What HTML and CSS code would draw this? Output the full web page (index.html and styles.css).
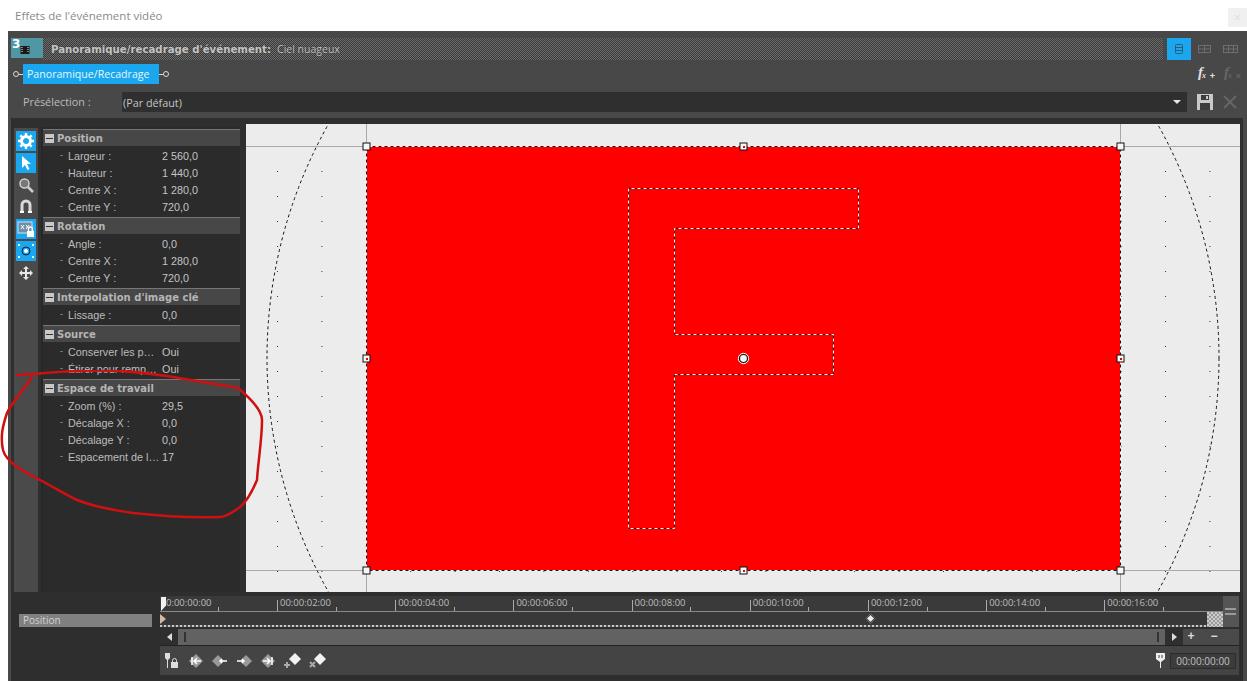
FILE: index.html
```html
<!DOCTYPE html>
<html lang="fr">
<head>
<meta charset="utf-8">
<title>Effets de l'événement vidéo</title>
<link rel="stylesheet" href="styles.css">
</head>
<body>
<div class="titlebar">
  <span class="title">Effets de l'événement vidéo</span>
  <span class="close">×</span>
</div>
<div class="app">
  <div class="headrow">
    <div class="fxicon"><b>3</b><svg width="10" height="10" viewBox="0 0 10 10"><rect x="0.5" y="1" width="9" height="8" fill="#1a1a1a"/><path d="M2 2v6M8 2v6" stroke="#eee" stroke-dasharray="1 1"/></svg></div>
    <div class="hatch"><strong>Panoramique/recadrage d'événement:</strong><span>Ciel nuageux</span></div>
    <div class="layouts">
      <span class="layoutbtn on"><svg width="10" height="12" viewBox="0 0 10 12"><rect x="1.5" y="1.5" width="7" height="9" rx="1" fill="none" stroke="#2b5a7a"/><path d="M1.5 4.5h7M1.5 7.5h7" stroke="#2b5a7a"/></svg></span>
      <span class="layoutbtn"><svg width="14" height="10" viewBox="0 0 14 10"><rect x="0.5" y="1.5" width="12" height="7" fill="none" stroke="#6e6e6e"/><path d="M6.5 1.5v7M.5 5h12" stroke="#6e6e6e"/></svg></span>
      <span class="layoutbtn"><svg width="16" height="10" viewBox="0 0 16 10"><rect x="0.5" y="1.5" width="14" height="7" fill="none" stroke="#6e6e6e"/><path d="M5.5 1.5v7M10.5 1.5v7M.5 5h14" stroke="#6e6e6e"/></svg></span>
    </div>
  </div>
  <div class="tabrow">
    <div class="chain">
      <i class="ring"></i><i class="dash"></i>
      <span class="tab">Panoramique/Recadrage</span>
      <i class="dash"></i><i class="ring"></i>
    </div>
    <div class="fxbtns">
      <span class="fx">f<sub>x</sub><em class="plus">+</em></span>
      <span class="fx dim">f<sub>x</sub><em class="plus">×</em></span>
    </div>
  </div>
  <div class="presetrow">
    <span class="presetlabel">Présélection :</span>
    <div class="presetbox"><span>(Par défaut)</span><i class="caret"></i></div>
    <svg class="presetic" width="16" height="16" viewBox="0 0 16 16"><path d="M0 0h16v16H0z" fill="#c9c9c9"/><path d="M4 1h8v5H4zM3 9h10v7H3z" fill="#3c3c3c"/><path d="M9 2h2v3H9z" fill="#c9c9c9"/></svg>
    <svg class="presetic" width="16" height="16" viewBox="0 0 16 16"><path d="M2 2l12 12M14 2L2 14" stroke="#666" stroke-width="2"/></svg>
  </div>
  <div class="main">
    <div class="tools">
      <span class="tool on"><svg width="16" height="16" viewBox="0 0 16 16"><circle cx="8" cy="8" r="4.5" fill="none" stroke="#fff" stroke-width="3"/><path d="M8 0v3M8 13v3M0 8h3M13 8h3M2.3 2.3l2 2M11.7 11.7l2 2M2.3 13.7l2-2M11.7 4.3l2-2" stroke="#fff" stroke-width="2.4"/></svg></span>
      <span class="tool on"><svg width="14" height="16" viewBox="0 0 14 16"><path d="M3 1l9 8H8l2.500 5-2 1L6 10l-3 3z" fill="#fff"/></svg></span>
      <span class="tool"><svg width="16" height="16" viewBox="0 0 16 16"><circle cx="6.500" cy="6.500" r="4.500" fill="#777" stroke="#d0d0d0" stroke-width="1.500"/><path d="M10 10l5 5" stroke="#d0d0d0" stroke-width="2.500"/></svg></span>
      <span class="tool"><svg width="12" height="16" viewBox="0 0 12 16"><path d="M2 14V6a4 4 0 0 1 8 0v8" fill="none" stroke="#d8d8d8" stroke-width="3"/><path d="M0 13h4M8 13h4" stroke="#fff" stroke-width="2"/></svg></span>
      <span class="tool on"><svg width="18" height="17" viewBox="0 0 18 17"><rect x="1" y="1" width="14" height="11" fill="#6f8fa5" stroke="#d5e2ea"/><path d="M4 4l3 4M7 4L4 8M9 4l3 4M12 4L9 8" stroke="#fff"/><rect x="10" y="10" width="7" height="6" fill="#fff"/><path d="M11.500 10V8a2 2 0 0 1 4 0v2" fill="none" stroke="#fff" stroke-width="1.300"/></svg></span>
      <span class="tool on"><svg width="18" height="16" viewBox="0 0 18 16"><circle cx="9" cy="8" r="4" fill="none" stroke="#123" /><circle cx="9" cy="8" r="2" fill="#fff"/><path d="M1 1h2v2H1zM15 1h2v2h-2zM1 13h2v2H1zM15 13h2v2h-2z" fill="#dff"/></svg></span>
      <span class="tool"><svg width="14" height="14" viewBox="0 0 14 14"><path d="M7 0l3 3H8v3h3V4l3 3-3 3V8H8v3h2l-3 3-3-3h2V8H3v2L0 7l3-3v2h3V3H4z" fill="#e6e6e6"/></svg></span>
    </div>
    <div class="props">
      <div class="group"><i class="minus"></i>Position</div>
      <div class="row"><i class="tick"></i><span class="lab">Largeur :</span><span class="val">2 560,0</span></div>
      <div class="row"><i class="tick"></i><span class="lab">Hauteur :</span><span class="val">1 440,0</span></div>
      <div class="row"><i class="tick"></i><span class="lab">Centre X :</span><span class="val">1 280,0</span></div>
      <div class="row"><i class="tick"></i><span class="lab">Centre Y :</span><span class="val">720,0</span></div>
      <div class="group"><i class="minus"></i>Rotation</div>
      <div class="row"><i class="tick"></i><span class="lab">Angle :</span><span class="val">0,0</span></div>
      <div class="row"><i class="tick"></i><span class="lab">Centre X :</span><span class="val">1 280,0</span></div>
      <div class="row"><i class="tick"></i><span class="lab">Centre Y :</span><span class="val">720,0</span></div>
      <div class="group"><i class="minus"></i>Interpolation d'image clé</div>
      <div class="row"><i class="tick"></i><span class="lab">Lissage :</span><span class="val">0,0</span></div>
      <div class="group"><i class="minus"></i>Source</div>
      <div class="row"><i class="tick"></i><span class="lab">Conserver les p…</span><span class="val">Oui</span></div>
      <div class="row"><i class="tick"></i><span class="lab">Étirer pour remp…</span><span class="val">Oui</span></div>
      <div class="group"><i class="minus"></i>Espace de travail</div>
      <div class="row"><i class="tick"></i><span class="lab">Zoom (%) :</span><span class="val">29,5</span></div>
      <div class="row"><i class="tick"></i><span class="lab">Décalage X :</span><span class="val">0,0</span></div>
      <div class="row"><i class="tick"></i><span class="lab">Décalage Y :</span><span class="val">0,0</span></div>
      <div class="row"><i class="tick"></i><span class="lab">Espacement de l…</span><span class="val">17</span></div>
    </div>
    <div class="canvas">
      <svg class="stage" width="994" height="468" viewBox="0 0 994 468">
        <defs>
          <pattern id="dots" x="31" y="-3" width="44.4" height="25" patternUnits="userSpaceOnUse"><rect width="1" height="1" fill="#333"/></pattern>
        </defs>
        <rect width="994" height="468" fill="#ececec"/>
        <rect width="994" height="468" fill="url(#dots)"/>
        <path d="M120.500 0V468M874.500 0V468M0 22.500H994M0 446.500H994" stroke="#a9a9a9"/>
        <rect x="120.500" y="22.500" width="754" height="424" fill="#ff0000"/>
        <rect x="120.500" y="22.500" width="754" height="424" fill="none" stroke="#fff"/>
        <rect x="120.500" y="22.500" width="754" height="424" fill="none" stroke="#111" stroke-dasharray="3 3"/>
        <circle cx="497" cy="234" r="476" fill="none" stroke="#111" stroke-dasharray="3 3"/>
        <path d="M382.500 64.500H612.500V104.500H428.500V210.500H587.500V250.500H428.500V404.500H382.500Z" fill="none" stroke="#fff"/>
        <path d="M382.500 64.500H612.500V104.500H428.500V210.500H587.500V250.500H428.500V404.500H382.500Z" fill="none" stroke="#111" stroke-dasharray="3 3"/>
        <g fill="#f4f8f8" stroke="#111">
          <rect x="117" y="19" width="7" height="7"/><rect x="871" y="19" width="7" height="7"/>
          <rect x="117" y="443" width="7" height="7"/><rect x="871" y="443" width="7" height="7"/>
          <rect x="494" y="19" width="7" height="7"/><rect x="494" y="443" width="7" height="7"/>
          <rect x="117" y="231" width="7" height="7"/><rect x="871" y="231" width="7" height="7"/>
        </g>
        <g fill="#e00" stroke="none">
          <rect x="497" y="22" width="2" height="2"/><rect x="497" y="446" width="2" height="2"/>
          <rect x="120" y="234" width="2" height="2"/><rect x="874" y="234" width="2" height="2"/>
        </g>
        <circle cx="497.500" cy="234.500" r="4" fill="#eef6f8" stroke="#111" stroke-width="1.200"/>
        <circle cx="497.500" cy="234.500" r="5.200" fill="none" stroke="#fff"/>
      </svg>
    </div>
  </div>
  <div class="bottom">
    <div class="kfleft"><span class="kflabel">Position</span></div>
    <div class="kfright">
      <div class="timeline">
        <div class="timelinebody">
          <div class="ruler">
            <i class="playhead"></i>
            <span class="cell first">0:00:00:00</span>
            <span class="cell">00:00:02:00</span>
            <span class="cell">00:00:04:00</span>
            <span class="cell">00:00:06:00</span>
            <span class="cell">00:00:08:00</span>
            <span class="cell">00:00:10:00</span>
            <span class="cell">00:00:12:00</span>
            <span class="cell">00:00:14:00</span>
            <span class="cell">00:00:16:00</span>
          </div>
          <div class="track"><i class="cursorkf"></i><i class="kf"></i><i class="checker"></i></div>
        </div>
        <div class="eqbtn"><i></i><i></i></div>
      </div>
      <div class="scrollrow">
        <span class="sbtn"><i class="tri left"></i></span>
        <div class="sbar"><i class="grip"></i><i class="grip"></i></div>
        <span class="sbtn"><i class="tri right"></i></span>
        <span class="zbtn">+</span><span class="zbtn">−</span>
      </div>
      <div class="transport">
        <svg class="tico" width="14" height="16" viewBox="0 0 14 16"><path d="M0 0h5v5L3 7v8H2V7L0 5z" fill="#ddd"/><rect x="6" y="9" width="7" height="6" fill="#ddd"/><path d="M7.500 9V7.500a2 2 0 0 1 4 0V9" fill="none" stroke="#ddd"/></svg>
        <svg class="tico" width="16" height="14" viewBox="0 0 16 14"><path d="M8 0l7 7-7 7-7-7z" fill="#999"/><path d="M13 7H6M9 4L6 7l3 3M4 3v8" stroke="#fff" stroke-width="1.500" fill="none"/></svg>
        <svg class="tico" width="16" height="14" viewBox="0 0 16 14"><path d="M6 1l6 6-6 6-6-6z" fill="#999"/><path d="M15 7H8M10 5L8 7l2 2" stroke="#fff" stroke-width="1.500" fill="none"/></svg>
        <svg class="tico" width="16" height="14" viewBox="0 0 16 14"><path d="M10 1l6 6-6 6-6-6z" fill="#999"/><path d="M1 7h7M6 5l2 2-2 2" stroke="#fff" stroke-width="1.500" fill="none"/></svg>
        <svg class="tico" width="16" height="14" viewBox="0 0 16 14"><path d="M8 0l7 7-7 7-7-7z" fill="#999"/><path d="M3 7h7M7 4l3 3-3 3M12 3v8" stroke="#fff" stroke-width="1.500" fill="none"/></svg>
        <svg class="tico" width="17" height="16" viewBox="0 0 17 16"><path d="M11 0l6 6-6 6-6-6z" fill="#f2f2f2"/><path d="M3 9v6M0 12h6" stroke="#aaa" stroke-width="2"/></svg>
        <svg class="tico" width="17" height="16" viewBox="0 0 17 16"><path d="M11 0l6 6-6 6-6-6z" fill="#f2f2f2"/><path d="M1 9l5 5M6 9l-5 5" stroke="#aaa" stroke-width="2"/></svg>
        <span class="grow"></span>
        <svg class="pin" width="9" height="15" viewBox="0 0 9 15"><path d="M0 0h9v6L5 9v6H4V9L0 6z" fill="#eee"/><path d="M3 2v3M6 2v3" stroke="#444"/></svg>
        <span class="timebox">00:00:00:00</span>
      </div>
    </div>
  </div>
</div>
<svg class="scribble" width="270" height="160" viewBox="0 370 270 160">
  <path d="M17 375C40 374 60 371 80 371C110 369 140 372 167 376C190 380 215 384 238 388C250 398 262 410 262 420C262 440 258 462 257 480C252 492 246 502 240 507C232 513 226 517 220 517C190 518 160 516 133 513C112 510 92 506 77 500C64 494 52 486 40 480C24 472 6 462 3 450C0 436 3 425 7 413C12 402 24 390 32 377" fill="none" stroke="#d01010" stroke-width="2.500" stroke-linecap="round"/>
</svg>
</body>
</html>
```
FILE: styles.css
```css
* { box-sizing: border-box; }
html, body { margin: 0; padding: 0; }
body {
  position: relative;
  width: 1247px;
  height: 681px;
  overflow: hidden;
  background: #fff;
  font-family: "Open Sans", "Liberation Sans", sans-serif;
  font-size: 11px;
  color: #c8c8c8;
}
i, em { display: block; font-style: normal; }

.titlebar {
  height: 31px;
  display: flex;
  align-items: center;
  justify-content: space-between;
  padding: 0 0 0 15px;
}
.title { font-size: 11.500px; color: #8a8a8a; }
.close {
  width: 19px;
  height: 19px;
  margin-top: 3px;
  background: #f0f0f0;
  color: #ddd;
  text-align: center;
  line-height: 19px;
  font-size: 12px;
}

.app {
  margin-left: 8px;
  height: 650px;
  background: #484848;
  display: flex;
  flex-direction: column;
}

.headrow {
  height: 29px;
  padding: 7px 0 0 3px;
  display: flex;
  align-items: flex-start;
}
.fxicon {
  position: relative;
  width: 32px;
  height: 20px;
  background: #4f97a3;
  display: flex;
}
.fxicon b {
  color: #fff;
  font: bold 12px "DejaVu Sans", sans-serif;
  margin: 0 0 0 1px;
  line-height: 13px;
}
.fxicon svg { margin-top: 7px; }
.hatch {
  width: 1120px;
  height: 22px;
  background-color: #3c3c3c;
  background-image: conic-gradient(#6c6c6c 25%, #3a3a3a 0 50%, #6c6c6c 0 75%, #3a3a3a 0);
  background-size: 2px 2px;
  display: flex;
  align-items: center;
  padding-left: 8px;
  gap: 6px;
}
.hatch strong {
  font: bold 10.200px "DejaVu Sans", sans-serif;
  color: #c4c4c4;
  text-shadow: 0 0 2px #3a3a3a;
}
.hatch span {
  font: 10.500px "Open Sans", sans-serif;
  color: #bdbdbd;
  text-shadow: 0 0 2px #3a3a3a;
}
.layouts { display: flex; margin-left: 4px; gap: 2px; }
.layoutbtn {
  width: 24px;
  height: 22px;
  display: flex;
  align-items: center;
  justify-content: center;
}
.layoutbtn.on { background: #1aa7f0; }

.tabrow {
  height: 32px;
  padding: 4px 0 0 5px;
  display: flex;
  justify-content: space-between;
}
.chain { display: flex; align-items: center; height: 20px; }
.ring {
  width: 6px;
  height: 6px;
  border: 1px solid #d8d8d8;
  border-radius: 50%;
}
.dash { width: 4px; height: 1px; background: #d8d8d8; }
.tab {
  width: 136px;
  height: 20px;
  background: #1aa7f0;
  color: #e8f6fd;
  font-size: 10.600px;
  line-height: 20px;
  padding-left: 4px;
}
.fxbtns { display: flex; gap: 11px; padding-right: 8px; }
.fx {
  position: relative;
  width: 15px;
  height: 18px;
  font: italic bold 15px "Liberation Serif", serif;
  color: #e0e0e0;
  line-height: 16px;
  letter-spacing: -1px;
}
.fx sub { font-size: 8px; vertical-align: -1px; }
.fx .plus {
  position: absolute;
  right: -1px;
  bottom: 1px;
  font: bold 9px/9px "Liberation Sans", sans-serif;
}
.fx.dim { color: #666; }

.presetrow {
  height: 26px;
  display: flex;
  align-items: flex-start;
  padding-left: 15px;
}
.presetlabel { width: 99px; line-height: 20px; font-size: 10.800px; color: #bcbcbc; }
.presetbox {
  width: 1065px;
  height: 20px;
  background: #2f2f2f;
  display: flex;
  align-items: center;
  justify-content: space-between;
  padding: 0 6px 0 1px;
  font-size: 10.800px;
  color: #c4c4c4;
}
.caret {
  width: 0;
  height: 0;
  border: 4px solid transparent;
  border-top: 4px solid #e8e8e8;
  border-bottom: 0;
}
.presetic { margin: 2px 0 0 10px; }
.presetic:last-child { margin-left: 9px; }

.main {
  width: 1232px;
  height: 474px;
  margin-left: 3px;
  background: #2f2f2f;
  display: flex;
  padding: 6px 3px 0 3px;
}
.tools {
  width: 24px;
  margin-top: 4px;
  height: 464px;
  background: #4a4a4a;
  display: flex;
  flex-direction: column;
  align-items: center;
  padding-top: 3px;
  gap: 2px;
}
.tool {
  width: 20px;
  height: 20px;
  display: flex;
  align-items: center;
  justify-content: center;
}
.tool.on { background: #1aa7f0; }
.props {
  width: 199px;
  margin: 3px 0 0 3px;
  height: 465px;
  background: #2b2b2b;
  border-left: 2px solid #272727;
}
.group {
  height: 16px;
  margin: 3px 0 1px;
  padding: 1px 0 0 2px;
  background: #474747;
  box-shadow: 0 -1px 0 #777;
  font: bold 10px/15px "DejaVu Sans", sans-serif;
  color: #b5b5b5;
  display: flex;
  align-items: center;
  white-space: nowrap;
}
.minus {
  position: relative;
  width: 9px;
  height: 9px;
  background: #c8c8c8;
  margin-right: 3px;
}
.minus::after {
  content: "";
  position: absolute;
  left: 1px;
  right: 1px;
  top: 4px;
  height: 1px;
  background: #333;
}
.row {
  height: 17px;
  display: flex;
  align-items: center;
  padding-left: 17px;
  font-family: "Liberation Sans", sans-serif;
  font-size: 10.800px;
  color: #bcbcbc;
  white-space: nowrap;
}
.tick { width: 3px; height: 1px; background: #4f7f6f; margin-right: 5px; }
.lab { width: 94px; overflow: hidden; }
.val { color: #c4c4c4; }
.canvas {
  width: 994px;
  height: 468px;
  margin-left: 6px;
  overflow: hidden;
}
.stage { display: block; }

.bottom {
  flex: 1;
  display: flex;
  margin-left: 3px;
  width: 1232px;
  background: #2e2e2e;
}
.kfleft {
  width: 149px;
  padding: 22px 0 0 8px;
}
.kflabel {
  display: block;
  width: 133px;
  height: 13px;
  background: #808080;
  color: #d0d0d0;
  font-size: 10px;
  line-height: 13px;
  padding-left: 4px;
}
.kfright { flex: 1; display: flex; flex-direction: column; padding-top: 4px; }
.timeline { display: flex; height: 31px; width: 1079px; }
.timelinebody { flex: 1; background: #3a3a3a; }
.ruler {
  position: relative;
  height: 16px;
  display: flex;
}
.playhead {
  position: absolute;
  left: 1px;
  top: 1px;
  width: 5px;
  height: 14px;
  background: #f2f2f2;
  clip-path: polygon(0 0, 100% 0, 100% 60%, 0 100%);
}
.cell {
  width: 118.200px;
  height: 16px;
  font-size: 9.500px;
  line-height: 14px;
  padding-left: 3px;
  color: #bdbdbd;
  border-bottom: 1px solid #888;
  background:
    linear-gradient(#aaa, #aaa) 0 100% / 1px 11px no-repeat,
    linear-gradient(#aaa, #aaa) 50% 100% / 1px 4px no-repeat;
}
.cell.first {
  width: 117px;
  padding-left: 6px;
  background: linear-gradient(#aaa, #aaa) 50% 100% / 1px 4px no-repeat;
}
.track {
  position: relative;
  height: 15px;
  background:
    repeating-linear-gradient(90deg, #c8c8c8 0 2px, #555 2px 4px) 0 100% / 100% 2px no-repeat,
    #383838;
}
.cursorkf {
  position: absolute;
  left: 0;
  top: 2px;
  border-left: 6px solid #d8b8a0;
  border-top: 5px solid transparent;
  border-bottom: 5px solid transparent;
}
.kf {
  position: absolute;
  left: 707px;
  top: 3px;
  width: 7px;
  height: 7px;
  background: #eee;
  border: 1px solid #333;
  transform: rotate(45deg);
}
.checker {
  position: absolute;
  right: 0;
  top: 0;
  width: 16px;
  height: 15px;
  background-color: #aaa;
  background-image: conic-gradient(#999 25%, #ccc 0 50%, #999 0 75%, #ccc 0);
  background-size: 4px 4px;
}
.eqbtn {
  width: 17px;
  background: #555;
  display: flex;
  flex-direction: column;
  align-items: center;
  justify-content: center;
  gap: 3px;
}
.eqbtn i { width: 11px; height: 2px; background: #999; }

.scrollrow {
  height: 17px;
  margin-top: 2px;
  display: flex;
  width: 1079px;
  background: #4a4a4a;
  border-bottom: 1px solid #222;
  padding-right: 17px;
}
.sbtn {
  width: 18px;
  background: #2f2f2f;
  display: flex;
  align-items: center;
  justify-content: center;
}
.tri { width: 0; height: 0; border: 4px solid transparent; }
.tri.left { border-right: 5px solid #ddd; border-left: 0; }
.tri.right { border-left: 5px solid #ddd; border-right: 0; }
.sbar {
  flex: 1;
  background: #626262;
  display: flex;
  align-items: center;
  justify-content: space-between;
  padding: 0 6px;
}
.grip { width: 2px; height: 10px; background: #333; }
.zbtn {
  width: 16px;
  color: #ddd;
  font: bold 12px/15px "Liberation Sans", sans-serif;
  text-align: center;
}
.zbtn:last-child { margin-left: 7px; }
.transport {
  height: 29px;
  width: 1079px;
  background: #444;
  display: flex;
  align-items: center;
  padding-left: 5px;
  gap: 8px;
}
.tico { flex: none; }
.tico:first-child { margin-right: 1px; }
.grow { flex: 1; }
.pin { flex: none; margin-right: -3px; }
.timebox {
  width: 66px;
  height: 16px;
  margin-right: 3px;
  border: 1px solid #2c2c2c;
  background: #3c3c3c;
  color: #c0c0c0;
  font-size: 10px;
  line-height: 14px;
  text-align: center;
}

.scribble {
  position: absolute;
  left: 0;
  top: 370px;
  pointer-events: none;
}
```
